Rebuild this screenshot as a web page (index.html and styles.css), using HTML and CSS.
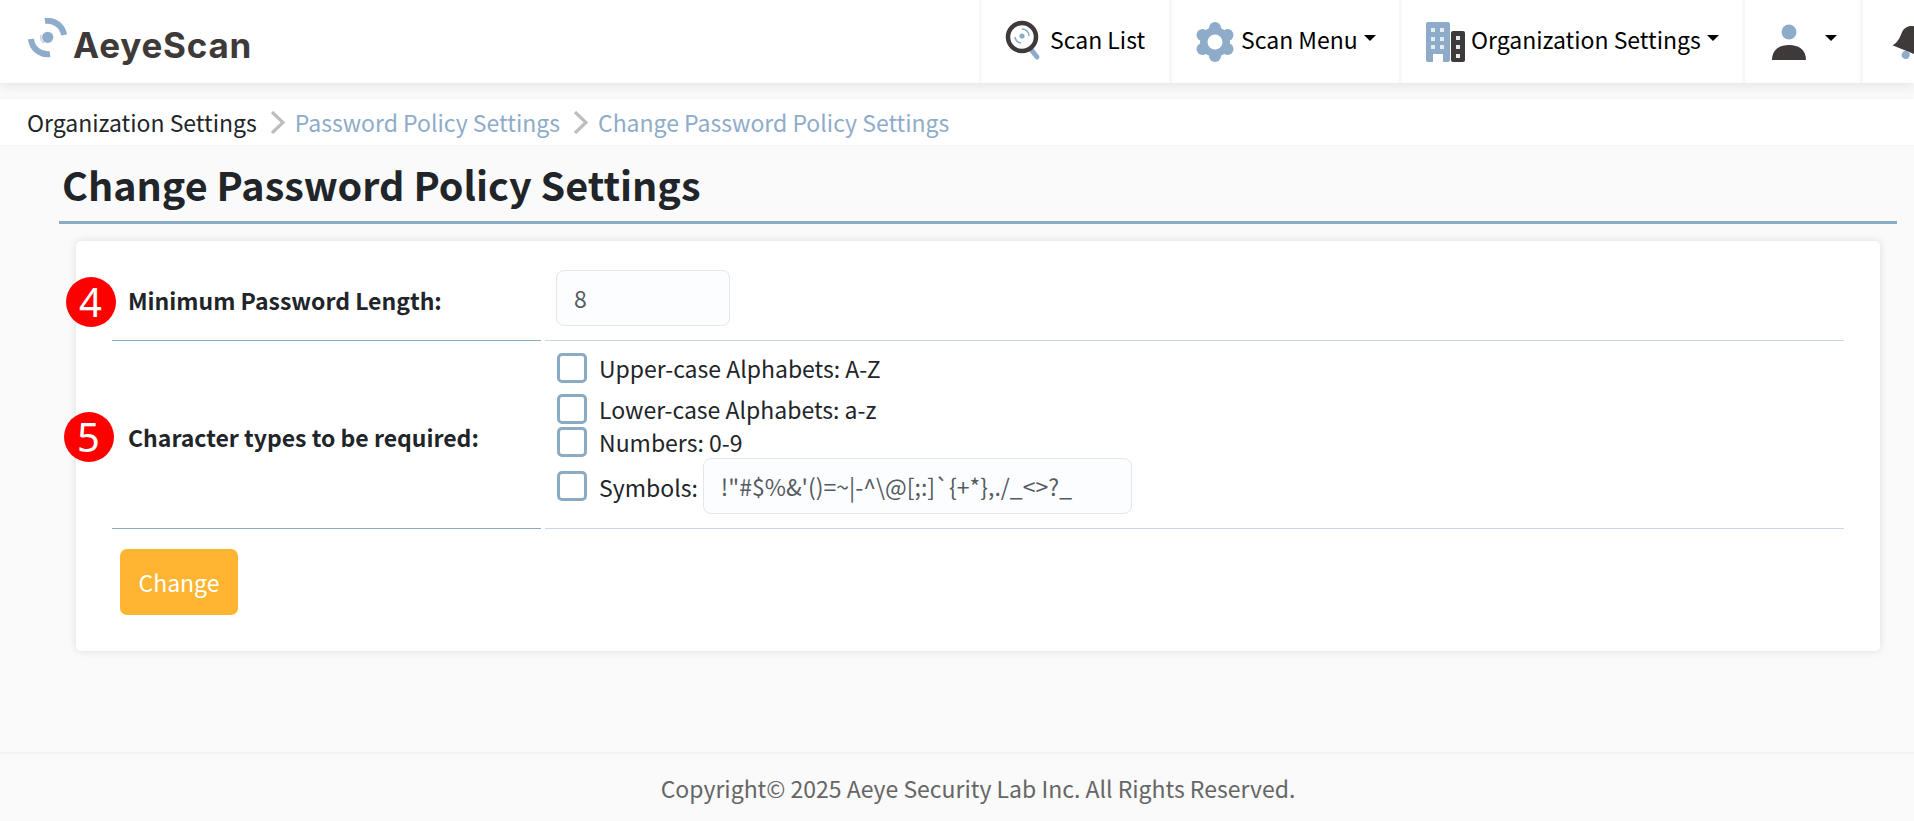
FILE: index.html
```html
<!DOCTYPE html>
<html lang="en">
<head>
<meta charset="utf-8">
<title>Change Password Policy Settings</title>
<link rel="stylesheet" href="styles.css">
</head>
<body>
<header class="topbar">
  <a class="brand">
    <svg class="brand-mark" width="40" height="40" viewBox="28 18 40 40" aria-hidden="true">
      <path d="M45 21A16.5 16.5 0 0 1 64 35" fill="none" stroke="#8eacc9" stroke-width="6"/>
      <path d="M31 39A16.5 16.5 0 0 0 50 54" fill="none" stroke="#8eacc9" stroke-width="6"/>
      <circle cx="47.7" cy="37.3" r="5.6" fill="#8eacc9"/>
      <path d="M41 35A7 7 0 0 0 44 43" fill="none" stroke="#c5d5e4" stroke-width="1.5"/>
    </svg>
    <span class="brand-name">AeyeScan</span>
  </a>
  <nav class="nav">
    <a class="nav-item nav-scan">
      <svg class="icon" width="38" height="42" viewBox="0 0 38 42" aria-hidden="true">
        <path d="M25 27L33 37" stroke="#8eacc9" stroke-width="5" stroke-linecap="round"/>
        <circle cx="18" cy="17" r="14" fill="#fff" stroke="#3e3a39" stroke-width="4.5"/>
        <circle cx="18" cy="16" r="2.6" fill="#8eacc9"/>
        <path d="M18 9A7 7 0 0 1 25 16M11 17A7 7 0 0 0 17 23" fill="none" stroke="#8eacc9" stroke-width="1.6"/>
      </svg>
      <span>Scan List</span>
    </a>
    <a class="nav-item nav-menu">
      <svg class="icon" width="38" height="40" viewBox="0 0 38 40" aria-hidden="true">
        <g fill="#8eacc9">
          <circle cx="19" cy="6" r="6"/><circle cx="19" cy="34" r="6"/>
          <circle cx="6.5" cy="13" r="6"/><circle cx="31.5" cy="13" r="6"/>
          <circle cx="6.5" cy="27" r="6"/><circle cx="31.5" cy="27" r="6"/>
          <circle cx="19" cy="20" r="15"/>
        </g>
        <circle cx="19" cy="20" r="7.5" fill="#fff"/>
      </svg>
      <span>Scan Menu</span><i class="caret"></i>
    </a>
    <a class="nav-item nav-org">
      <svg class="icon" width="39" height="40" viewBox="0 0 39 40" aria-hidden="true">
        <rect x="0" y="0" width="24" height="40" rx="2" fill="#8eacc9"/>
        <rect x="25" y="9" width="14" height="31" rx="2" fill="#3e3a39"/>
        <g fill="#e4ecf3">
          <rect x="5" y="6" width="4" height="4"/><rect x="14" y="6" width="4" height="4"/>
          <rect x="5" y="15" width="4" height="4"/><rect x="14" y="15" width="4" height="4"/>
          <rect x="5" y="23" width="4" height="4"/><rect x="14" y="23" width="4" height="4"/>
          <rect x="7" y="32" width="10" height="8" fill="#fff"/>
          <rect x="30" y="14" width="4" height="4"/><rect x="30" y="23" width="4" height="4"/><rect x="30" y="32" width="4" height="4"/>
        </g>
      </svg>
      <span>Organization Settings</span><i class="caret"></i>
    </a>
    <a class="nav-item nav-user">
      <svg class="icon" width="34" height="36" viewBox="0 0 34 36" aria-hidden="true">
        <circle cx="17" cy="8" r="7.5" fill="#8eacc9"/>
        <path d="M0 36C0 26 7 21 17 21S34 26 34 36Z" fill="#3e3a39"/>
      </svg>
      <i class="caret caret-user"></i>
    </a>
    <a class="nav-item nav-bell">
      <svg class="icon" width="40" height="40" viewBox="0 0 40 40" aria-hidden="true">
        <g transform="rotate(22 20 20)">
          <path d="M4 30C8 26 8 20 8 15C8 8 13 4 20 4S32 8 32 15C32 20 32 26 36 30Z" fill="#3e3a39"/>
          <circle cx="20" cy="34" r="4" fill="#8eacc9"/>
        </g>
      </svg>
    </a>
  </nav>
</header>

<div class="crumbs">
  <span class="crumb-root">Organization Settings</span>
  <svg class="chev" width="15" height="23" viewBox="0 0 15 23" aria-hidden="true"><path d="M2 1L13 11.5L2 22" fill="none" stroke="#bdbdbd" stroke-width="3.2"/></svg>
  <a class="crumb-link">Password Policy Settings</a>
  <svg class="chev" width="15" height="23" viewBox="0 0 15 23" aria-hidden="true"><path d="M2 1L13 11.5L2 22" fill="none" stroke="#bdbdbd" stroke-width="3.2"/></svg>
  <a class="crumb-link">Change Password Policy Settings</a>
</div>

<main class="main">
  <h1 class="title">Change Password Policy Settings</h1>
  <form class="card">
    <span class="badge badge-4">4</span>
    <span class="badge badge-5">5</span>
    <div class="form-grid">
      <div class="label-cell">Minimum Password Length:</div>
      <div class="value-cell value-length"><input class="field field-length" type="text" value="8"></div>
      <div class="label-cell">Character types to be required:</div>
      <div class="value-cell value-types">
        <label class="check"><input class="box" type="checkbox"><span>Upper-case Alphabets: A-Z</span></label>
        <label class="check check-gap"><input class="box" type="checkbox"><span>Lower-case Alphabets: a-z</span></label>
        <label class="check"><input class="box" type="checkbox"><span>Numbers: 0-9</span></label>
        <label class="check check-symbols"><input class="box" type="checkbox"><span>Symbols:</span><input class="field field-symbols" type="text" value="!&quot;#$%&amp;'()=~|-^\@[;:]`{+*},./_&lt;&gt;?_"></label>
      </div>
    </div>
    <button class="btn" type="button">Change</button>
  </form>
</main>

<footer class="footer">Copyright© 2025 Aeye Security Lab Inc. All Rights Reserved.</footer>
</body>
</html>
```
FILE: styles.css
```css
* { box-sizing: border-box; }
html, body { height: 100%; margin: 0; overflow: hidden; }
body {
  display: flex;
  flex-direction: column;
  background: #fafafa;
  color: #212529;
  font-family: "Noto Sans CJK JP", "Noto Sans", sans-serif;
  font-size: 23px;
  line-height: 36px;
}
.topbar {
  flex: none;
  display: flex;
  height: 83px;
  background: #fff;
  box-shadow: 0 2px 12px rgba(0, 0, 0, .1);
  overflow: hidden;
}
.brand {
  flex: 0 0 979px;
  display: flex;
  padding: 18px 0 0 28px;
  align-items: flex-start;
}
.brand-mark { flex: none; }
.brand-name {
  margin: 7px 0 0 5px;
  font-family: Inter, sans-serif;
  font-size: 35px;
  line-height: 40px;
  font-weight: 700;
  letter-spacing: .8px;
  color: #3e3a39;
}
.nav { display: flex; flex: none; }
.nav-item {
  display: flex;
  align-items: center;
  height: 83px;
  border-left: 3px solid #f8f8f8;
  color: #000;
  flex: none;
}
.nav-item > span { margin-top: -6px; }
.icon { flex: none; }
.nav-scan { width: 190px; padding-left: 22px; }
.nav-scan .icon { margin-top: -2px; margin-right: 8px; }
.nav-menu { width: 230px; padding-left: 24px; }
.nav-menu .icon { margin-right: 7px; }
.nav-org { width: 343px; padding-left: 24px; }
.nav-org .icon { margin-right: 6px; }
.nav-user { width: 118px; padding-left: 27px; }
.nav-bell { width: 120px; padding-left: 28px; }
.caret {
  width: 0;
  height: 0;
  margin: -8px 0 0 6px;
  border-top: 6px solid #000;
  border-left: 6px solid transparent;
  border-right: 6px solid transparent;
}
.caret-user { margin-left: 19px; }
.crumbs {
  flex: none;
  display: flex;
  align-items: center;
  height: 46px;
  margin-top: 16px;
  padding-left: 27px;
  background: #fff;
  box-shadow: 0 0 3px rgba(0, 0, 0, .06);
}
.crumb-root { color: #212529; }
.crumb-link { color: #8eacc9; }
.chev { flex: none; margin: 0 10px 0 13px; }
.main { flex: none; margin: 0 17px 0 59px; }
.title {
  margin: 0;
  height: 79px;
  padding: 14px 0 0 3px;
  border-bottom: 3px solid #8babc5;
  font-size: 39.5px;
  line-height: 50px;
  font-weight: 700;
  color: #212529;
}
.card {
  position: relative;
  margin: 17px 17px 0 17px;
  padding: 14px 36px 36px;
  height: 410px;
  background: #fff;
  border-radius: 5px;
  box-shadow: 0 0 8px rgba(0, 0, 0, .12);
}
.badge {
  position: absolute;
  width: 50px;
  height: 50px;
  border-radius: 50%;
  background: #f00;
  color: #fff;
  font-family: "Noto Sans", sans-serif;
  font-size: 40px;
  line-height: 50px;
  text-align: center;
}
.badge-4 { left: -10.5px; top: 36px; }
.badge-5 { left: -12.5px; top: 171px; }
.form-grid {
  display: grid;
  grid-template-columns: 429px 1fr;
  column-gap: 4px;
}
.label-cell {
  display: flex;
  align-items: center;
  padding: 4px 0 0 16px;
  border-bottom: 1px solid #8babc5;
  font-weight: 700;
}
.value-cell { border-bottom: 1px solid #c9d8e8; }
.value-length { padding: 15px 0 14px 11px; }
.value-types { padding: 10px 0 14px 12px; }
.field {
  height: 56px;
  padding: 0 17px;
  border: 1.5px solid #e4e6e9;
  border-radius: 8px;
  background: #fcfdfe;
  color: #555b62;
  font: inherit;
  outline: none;
}
.field-length { display: block; width: 174px; }
.field-symbols { width: 429px; margin-left: 5px; }
.check { display: flex; align-items: center; height: 33px; }
.check-gap { margin-top: 8px; }
.check-symbols { height: 56px; }
.check > span { margin-left: 12px; margin-top: 1px; }
.box {
  appearance: none;
  flex: none;
  width: 30px;
  height: 30px;
  margin: 0;
  border: 3px solid #8babc5;
  border-radius: 5px;
  background: #fff;
}
.btn {
  display: block;
  width: 118px;
  height: 66px;
  margin: 20px 0 0 8px;
  padding: 0;
  border: 0;
  border-radius: 7px;
  background: #ffb531;
  color: #fff;
  font: inherit;
}
.footer {
  flex: none;
  margin-top: auto;
  height: 69px;
  padding: 16px 0 0 42px;
  border-top: 2px solid #f2f2f2;
  text-align: center;
  color: #666;
}
```
